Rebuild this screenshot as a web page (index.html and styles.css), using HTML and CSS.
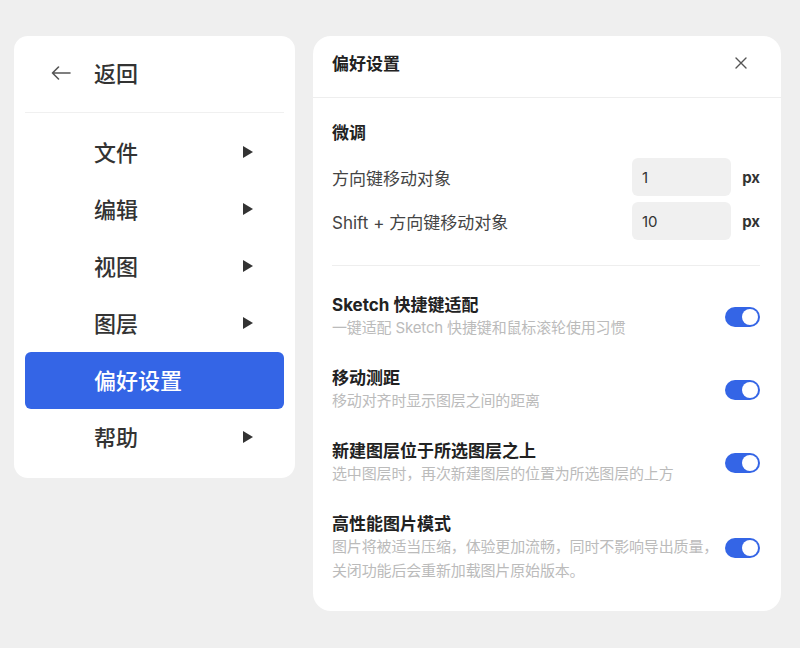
FILE: index.html
```html
<!DOCTYPE html>
<html lang="zh-CN">
<head>
    <meta charset="UTF-8">
    <meta name="viewport" content="width=device-width, initial-scale=1.0">
    <title>偏好设置</title>
    <link rel="stylesheet" href="styles.css">
</head>
<body>

<div class="page">
    <!-- Menu -->
    <div class="menu">
        <div class="menu-back">
            <svg class="back-icon" width="20" height="14" viewBox="0 0 20 14">
                <path d="M19 7H1.5M7.5 1L1.5 7L7.5 13" fill="none" stroke="#555" stroke-width="1.6" stroke-linecap="round" stroke-linejoin="round"/>
            </svg>
            <span>返回</span>
        </div>
        <div class="menu-divider"></div>
        <div class="menu-item"><span>文件</span><i class="caret"></i></div>
        <div class="menu-item"><span>编辑</span><i class="caret"></i></div>
        <div class="menu-item"><span>视图</span><i class="caret"></i></div>
        <div class="menu-item"><span>图层</span><i class="caret"></i></div>
        <div class="menu-item active"><span>偏好设置</span></div>
        <div class="menu-item"><span>帮助</span><i class="caret"></i></div>
    </div>

    <!-- Preferences -->
    <div class="panel">
        <div class="panel-header">
            <h2>偏好设置</h2>
            <svg class="close" width="12" height="12" viewBox="0 0 12 12">
                <path d="M1 1L11 11M11 1L1 11" stroke="#555" stroke-width="1.4" stroke-linecap="round"/>
            </svg>
        </div>

        <div class="panel-body">
            <h3>微调</h3>
            <div class="field">
                <label>方向键移动对象</label>
                <input type="text" value="1">
                <span class="unit">px</span>
            </div>
            <div class="field">
                <label>Shift + 方向键移动对象</label>
                <input type="text" value="10">
                <span class="unit">px</span>
            </div>

            <div class="divider"></div>

            <div class="option">
                <div class="option-text">
                    <div class="option-title">Sketch 快捷键适配</div>
                    <div class="option-desc">一键适配 Sketch 快捷键和鼠标滚轮使用习惯</div>
                </div>
                <span class="toggle"></span>
            </div>
            <div class="option">
                <div class="option-text">
                    <div class="option-title">移动测距</div>
                    <div class="option-desc">移动对齐时显示图层之间的距离</div>
                </div>
                <span class="toggle"></span>
            </div>
            <div class="option">
                <div class="option-text">
                    <div class="option-title">新建图层位于所选图层之上</div>
                    <div class="option-desc">选中图层时，再次新建图层的位置为所选图层的上方</div>
                </div>
                <span class="toggle"></span>
            </div>
            <div class="option">
                <div class="option-text">
                    <div class="option-title">高性能图片模式</div>
                    <div class="option-desc">图片将被适当压缩，体验更加流畅，同时不影响导出质量，关闭功能后会重新加载图片原始版本。</div>
                </div>
                <span class="toggle"></span>
            </div>
        </div>
    </div>
</div>

</body>
</html>
```

FILE: styles.css
```css
* {
    margin: 0;
    padding: 0;
    box-sizing: border-box;
}

body {
    font-family: Inter, "Noto Sans CJK SC", sans-serif;
    background-color: #efefef;
    color: #333;
}

.page {
    display: flex;
    align-items: flex-start;
    gap: 18px;
    padding: 36px 19px 0 14px;
}

/* Menu */
.menu {
    width: 281px;
    background: #fff;
    border-radius: 14px;
    padding: 11px 11px 12px;
}

.menu-back {
    display: flex;
    align-items: center;
    height: 52px;
    padding: 0 0 3px 26px;
    font-size: 22px;
    font-weight: 500;
    color: #333;
}

.back-icon {
    margin: 3px 23px 0 0;
}

.menu-divider {
    height: 1px;
    background: #f0f0f0;
    margin: 13px 0 11px;
}

.menu-item {
    display: flex;
    align-items: center;
    justify-content: space-between;
    height: 57px;
    padding: 0 31px 4px 69px;
    font-size: 22px;
    font-weight: 500;
    color: #333;
    border-radius: 6px;
}

.menu-item.active {
    background-color: #3465e6;
    color: #fff;
}

.caret {
    width: 0;
    height: 0;
    margin-top: 2px;
    border-top: 6px solid transparent;
    border-bottom: 6px solid transparent;
    border-left: 10px solid #333;
}

/* Panel */
.panel {
    width: 468px;
    background: #fff;
    border-radius: 18px;
    padding-bottom: 28px;
}

.panel-header {
    display: flex;
    align-items: flex-start;
    justify-content: space-between;
    height: 62px;
    padding: 16px 34px 0 19px;
    border-bottom: 1px solid #eee;
}

.panel-header h2 {
    font-size: 17px;
    font-weight: bold;
    line-height: 24px;
    color: #222;
}

.close {
    margin-top: 5px;
}

.panel-body {
    padding: 24px 21px 0 19px;
}

h3 {
    font-size: 17px;
    font-weight: bold;
    color: #222;
    line-height: 22px;
    margin-bottom: 14px;
}

.field {
    display: flex;
    align-items: center;
    margin-bottom: 6px;
}

.field label {
    flex: 1;
    font-size: 17px;
    color: #444;
}

.field input {
    width: 99px;
    height: 38px;
    padding: 0 10px;
    font-family: inherit;
    font-size: 15px;
    color: #333;
    background: #f0f0f0;
    border: none;
    border-radius: 6px;
}

.unit {
    width: 29px;
    text-align: right;
    font-size: 15px;
    font-weight: bold;
    color: #333;
}

.divider {
    height: 1px;
    background: #eee;
    margin: 25px 0 28px;
}

.option {
    display: flex;
    align-items: center;
    margin-bottom: 27px;
}

.option:last-child {
    margin-bottom: 0;
}

.option-text {
    flex: 1;
}

.option-title {
    font-size: 17px;
    font-weight: bold;
    color: #222;
    line-height: 22px;
}

.option-desc {
    font-size: 15px;
    color: #bbb;
    line-height: 24px;
    letter-spacing: -0.15px;
}

.toggle {
    position: relative;
    flex: none;
    width: 35px;
    height: 20px;
    border-radius: 10px;
    background-color: #3465e6;
}

.toggle::after {
    content: "";
    position: absolute;
    top: 2px;
    right: 2px;
    width: 16px;
    height: 16px;
    border-radius: 50%;
    background: #fff;
}
```
